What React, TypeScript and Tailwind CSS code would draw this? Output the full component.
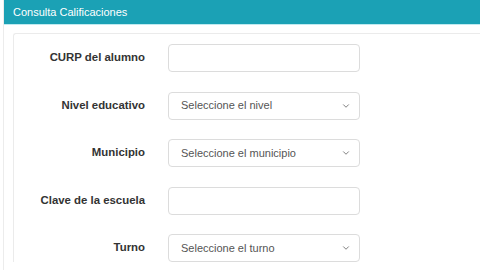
import { ChevronDown } from 'lucide-react';

type Field = {
  label: string;
  kind: 'input' | 'select';
  placeholder?: string;
};

const fields: Field[] = [
  { label: 'CURP del alumno', kind: 'input' },
  { label: 'Nivel educativo', kind: 'select', placeholder: 'Seleccione el nivel' },
  { label: 'Municipio', kind: 'select', placeholder: 'Seleccione el municipio' },
  { label: 'Clave de la escuela', kind: 'input' },
  { label: 'Turno', kind: 'select', placeholder: 'Seleccione el turno' },
];

export default function App() {
  return (
    <div
      className="h-[270px] w-[480px] overflow-hidden bg-white"
      style={{ fontFamily: '"Liberation Sans", Arial, sans-serif' }}
    >
      <div className="ml-[3px] h-full border-l border-[#ececec]">
        <div className="flex h-[24px] items-center bg-[#1ba1b5] pl-[9px] text-[11px] text-white">
          Consulta Calificaciones
        </div>
        <div className="h-px bg-[#bfeaf0]" />
        <div className="pl-[9px] pt-[8px]">
          <div className="rounded-tl-[3px] border-l border-t border-[#ebebeb] pt-[10px]">
            <div className="flex flex-col gap-[19.5px]">
              {fields.map((field) => (
                <div key={field.label} className="flex items-center">
                  <label className="w-[131px] text-right text-[11.4px] font-bold text-[#333]">
                    {field.label}
                  </label>
                  <div className="ml-[23px] flex h-[28px] w-[192px] items-center justify-between rounded-[4px] border border-[#dcdcdc] bg-white px-[12px] text-[11px] text-[#555]">
                    <span>{field.placeholder ?? ''}</span>
                    {field.kind === 'select' && (
                      <ChevronDown size={10} strokeWidth={2} className="mr-[-4px] text-[#666]" />
                    )}
                  </div>
                </div>
              ))}
            </div>
          </div>
        </div>
      </div>
    </div>
  );
}
